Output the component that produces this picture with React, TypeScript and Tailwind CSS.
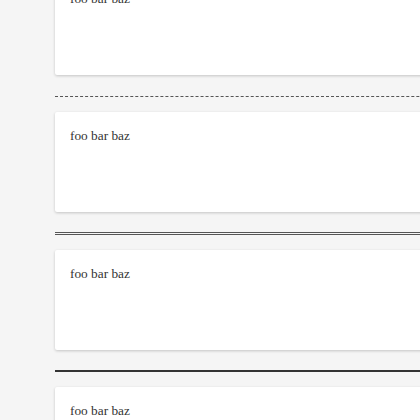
export default function App() {
  const card = (
    <div className="h-[100px] rounded-[2px] bg-white px-[15px] py-[15px] shadow-[0_1px_3px_rgba(0,0,0,0.2)]">
      <p className="text-[13.33px] leading-[1.4] text-[#333]">foo bar baz</p>
    </div>
  );

  return (
    <div className="h-[420px] w-[420px] overflow-hidden bg-[#f5f5f5] font-['Liberation_Serif',serif]">
      <div className="-mt-[25px] w-[600px] pl-[55px]">
        {card}
        <hr className="mt-[21px] mb-[15px] border-0 border-t border-dashed border-[#555]" />
        {card}
        <hr className="mt-[20px] mb-[15px] border-0 border-t-[3px] border-double border-[#555]" />
        {card}
        <hr className="mt-[20px] mb-[15px] border-0 border-t-2 border-solid border-[#333]" />
        {card}
      </div>
    </div>
  );
}
